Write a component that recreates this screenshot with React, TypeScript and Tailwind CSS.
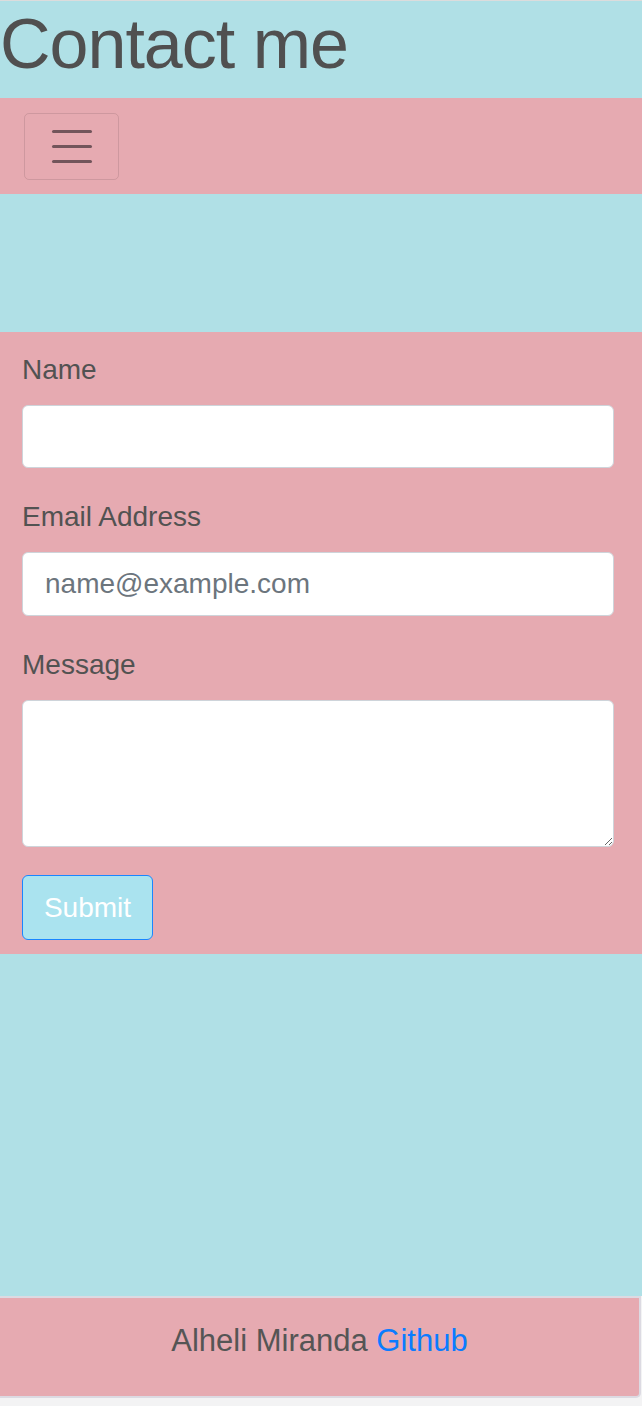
const App = () => {
  return (
    <div className="min-h-[1406px] bg-[#f3f3f4] font-['Liberation_Sans',Arial,sans-serif] text-[#525252]">
      <div className="border-t border-[#dcdcdc] bg-[#b0e0e6]">
        {/* Heading */}
        <h1 className="h-[97px] pt-[1px] text-[70px] leading-[84px] tracking-[-1px] text-[#505050]">Contact me</h1>

        {/* Navbar */}
        <nav className="flex h-[96px] items-center bg-[#e6aab1] px-[24px]">
          <button className="flex h-[67px] w-[95px] flex-col items-center justify-center gap-[12px] rounded-[5px] border border-black/10">
            <span className="block h-[3px] w-[40px] rounded-full bg-[#72555b]" />
            <span className="block h-[3px] w-[40px] rounded-full bg-[#72555b]" />
            <span className="block h-[3px] w-[40px] rounded-full bg-[#72555b]" />
          </button>
        </nav>

        <div className="h-[138px]" />

        {/* Form */}
        <form className="flex flex-col bg-[#e6aab1] px-[22px] pt-[17px] pb-[14px]">
          <label className="mb-[14px] text-[28px] leading-[42px]">Name</label>
          <input
            type="text"
            className="mb-[28px] h-[63px] w-[592px] rounded-[6px] border border-[#ced4da] bg-white px-[22px] text-[28px] outline-none"
          />
          <label className="mb-[14px] text-[28px] leading-[42px]">Email Address</label>
          <input
            type="email"
            placeholder="name@example.com"
            className="mb-[28px] h-[64px] w-[592px] rounded-[6px] border border-[#ced4da] bg-white px-[22px] text-[28px] text-[#495057] outline-none placeholder:text-[#6c757d]"
          />
          <label className="mb-[14px] text-[28px] leading-[42px]">Message</label>
          <textarea className="mb-[28px] block h-[147px] w-[592px] rounded-[6px] border border-[#ced4da] bg-white px-[22px] text-[28px] outline-none" />
          <button
            type="button"
            className="h-[65px] w-[131px] rounded-[6px] border border-[#1a86ff] bg-[#aae3ef] text-[28px] text-white"
          >
            Submit
          </button>
        </form>

        <div className="h-[342px]" />
      </div>

      {/* Footer */}
      <footer className="flex h-[102px] w-[641px] items-center justify-center rounded-br-[5px] border-y-2 border-r-2 border-[#dcdae2] bg-[#e6aab1] pb-[12px] text-[31px] leading-[46px] text-[#555]">
        <p>
          Alheli Miranda <a href="#" className="text-[#0a7cff]">Github</a>
        </p>
      </footer>
    </div>
  );
};

export default App;
